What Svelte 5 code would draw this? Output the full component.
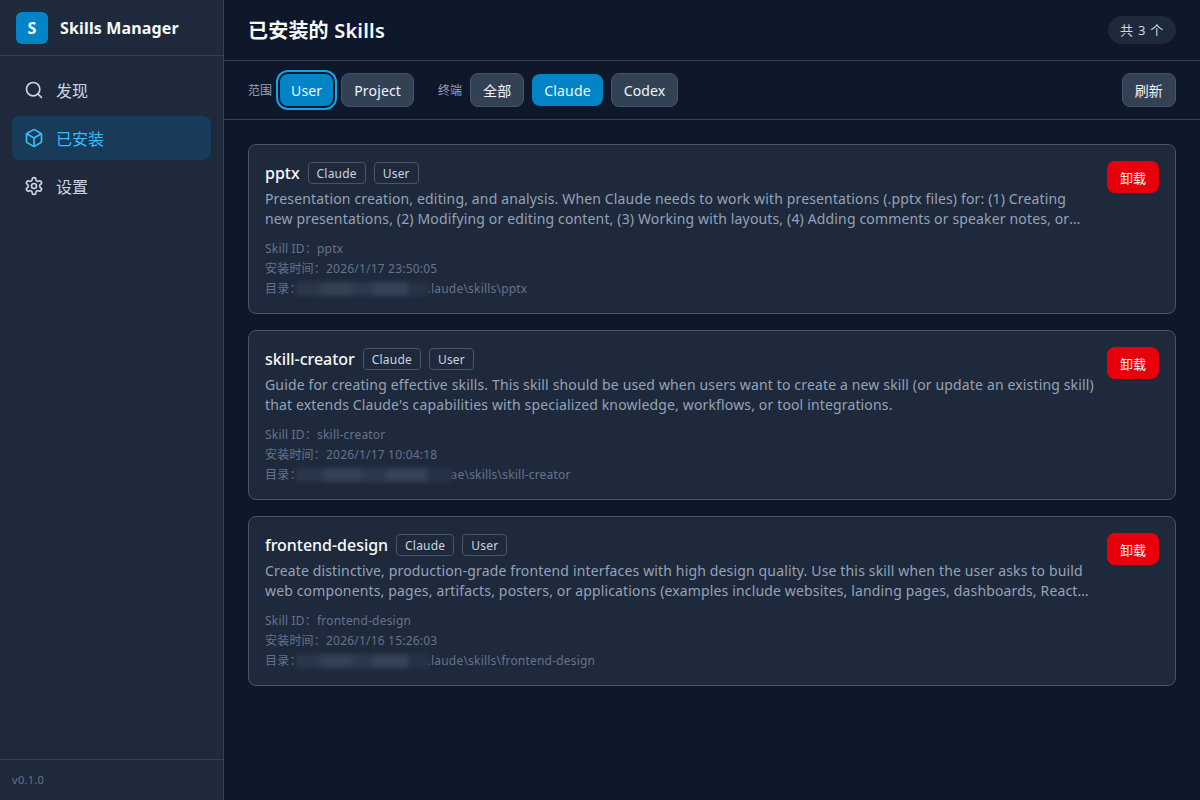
<script lang="ts">
	const scopes = [
		{ label: 'User', active: true, focus: true },
		{ label: 'Project', active: false, focus: false }
	];
	const terminals = [
		{ label: '全部', active: false },
		{ label: 'Claude', active: true },
		{ label: 'Codex', active: false }
	];
	const skills = [
		{
			name: 'pptx',
			desc: 'Presentation creation, editing, and analysis. When Claude needs to work with presentations (.pptx files) for: (1) Creating new presentations, (2) Modifying or editing content, (3) Working with layouts, (4) Adding comments or speaker notes, or any other presentation tasks',
			time: '2026/1/17 23:50:05',
			dir: '.laude\\skills\\pptx',
			blur: 133
		},
		{
			name: 'skill-creator',
			desc: "Guide for creating effective skills. This skill should be used when users want to create a new skill (or update an existing skill) that extends Claude's capabilities with specialized knowledge, workflows, or tool integrations.",
			time: '2026/1/17 10:04:18',
			dir: 'ae\\skills\\skill-creator',
			blur: 156
		},
		{
			name: 'frontend-design',
			desc: 'Create distinctive, production-grade frontend interfaces with high design quality. Use this skill when the user asks to build web components, pages, artifacts, posters, or applications (examples include websites, landing pages, dashboards, React components, HTML/CSS layouts)',
			time: '2026/1/16 15:26:03',
			dir: '.laude\\skills\\frontend-design',
			blur: 133
		}
	];
</script>

<div class="app">
	<aside class="sidebar">
		<div class="brand">
			<div class="logo">S</div>
			<span class="brand-name">Skills Manager</span>
		</div>
		<nav class="nav">
			<div class="nav-item">
				<svg viewBox="0 0 24 24" class="icon"><circle cx="11" cy="11" r="8" /><path d="m21 21-4.300-4.300" /></svg>
				<span>发现</span>
			</div>
			<div class="nav-item active">
				<svg viewBox="0 0 24 24" class="icon"><path d="M21 8a2 2 0 0 0-1-1.730l-7-4a2 2 0 0 0-2 0l-7 4A2 2 0 0 0 3 8v8a2 2 0 0 0 1 1.730l7 4a2 2 0 0 0 2 0l7-4A2 2 0 0 0 21 16Z" /><path d="m3.300 7 8.700 5 8.700-5" /><path d="M12 22V12" /></svg>
				<span>已安装</span>
			</div>
			<div class="nav-item">
				<svg viewBox="0 0 24 24" class="icon"><path d="M12.220 2h-.44a2 2 0 0 0-2 2v.18a2 2 0 0 1-1 1.730l-.43.25a2 2 0 0 1-2 0l-.15-.08a2 2 0 0 0-2.730.73l-.22.38a2 2 0 0 0 .73 2.730l.15.1a2 2 0 0 1 1 1.720v.51a2 2 0 0 1-1 1.740l-.15.09a2 2 0 0 0-.73 2.730l.22.38a2 2 0 0 0 2.730.73l.15-.08a2 2 0 0 1 2 0l.43.25a2 2 0 0 1 1 1.730V20a2 2 0 0 0 2 2h.44a2 2 0 0 0 2-2v-.18a2 2 0 0 1 1-1.730l.43-.25a2 2 0 0 1 2 0l.15.08a2 2 0 0 0 2.730-.73l.22-.39a2 2 0 0 0-.73-2.730l-.15-.08a2 2 0 0 1-1-1.740v-.5a2 2 0 0 1 1-1.740l.15-.09a2 2 0 0 0 .73-2.730l-.22-.38a2 2 0 0 0-2.730-.73l-.15.08a2 2 0 0 1-2 0l-.43-.25a2 2 0 0 1-1-1.730V4a2 2 0 0 0-2-2z" /><circle cx="12" cy="12" r="3" /></svg>
				<span>设置</span>
			</div>
		</nav>
		<div class="version">v0.1.0</div>
	</aside>

	<main class="main">
		<header class="header">
			<h1>已安装的 Skills</h1>
			<span class="count">共 3 个</span>
		</header>

		<div class="toolbar">
			<span class="label">范围</span>
			<div class="group">
				{#each scopes as s}
					<button class="btn" class:primary={s.active} class:focus={s.focus}>{s.label}</button>
				{/each}
			</div>
			<span class="label second">终端</span>
			<div class="group">
				{#each terminals as t}
					<button class="btn" class:primary={t.active}>{t.label}</button>
				{/each}
			</div>
			<button class="btn refresh">刷新</button>
		</div>

		<div class="list">
			{#each skills as skill}
				<article class="card">
					<div class="body">
						<div class="title-row">
							<h2>{skill.name}</h2>
							<span class="tag">Claude</span>
							<span class="tag">User</span>
						</div>
						<p class="desc">{skill.desc}</p>
						<div class="meta">
							<div>Skill ID：{skill.name}</div>
							<div>安装时间：{skill.time}</div>
							<div class="dir">目录：<span class="mask" style="width: {skill.blur}px"></span>{skill.dir}</div>
						</div>
					</div>
					<button class="remove">卸载</button>
				</article>
			{/each}
		</div>
	</main>
</div>

<style>
	:global(body) {
		margin: 0;
		background: #0f172a;
	}
	.app {
		display: flex;
		width: 1200px;
		height: 800px;
		overflow: hidden;
		color: #f1f5f9;
		font-family: "Noto Sans", "Noto Sans CJK SC", sans-serif;
	}
	.sidebar {
		width: 223px;
		flex: none;
		display: flex;
		flex-direction: column;
		background: #1e293b;
		border-right: 1px solid #334155;
	}
	.brand {
		display: flex;
		align-items: center;
		gap: 12px;
		height: 56px;
		padding: 0 16px;
		box-sizing: border-box;
		border-bottom: 1px solid #334155;
	}
	.logo {
		width: 32px;
		height: 32px;
		border-radius: 6px;
		background: #0284c7;
		display: flex;
		align-items: center;
		justify-content: center;
		font-size: 16px;
		font-weight: 700;
		color: #fff;
	}
	.brand-name {
		font-size: 16px;
		font-weight: 700;
		letter-spacing: 0.15px;
		color: #f8fafc;
	}
	.nav {
		flex: 1;
		display: flex;
		flex-direction: column;
		gap: 4px;
		padding: 12px;
	}
	.nav-item {
		display: flex;
		align-items: center;
		gap: 12px;
		height: 44px;
		padding: 0 12px;
		border-radius: 8px;
		font-size: 16px;
		color: #cbd5e1;
	}
	.nav-item.active {
		background: #183b59;
		color: #38bdf8;
	}
	.icon {
		width: 20px;
		height: 20px;
		flex: none;
		fill: none;
		stroke: currentColor;
		stroke-width: 2;
		stroke-linecap: round;
		stroke-linejoin: round;
	}
	.version {
		height: 41px;
		box-sizing: border-box;
		padding: 0 12px 2px;
		display: flex;
		align-items: center;
		border-top: 1px solid #334155;
		font-size: 11px;
		letter-spacing: 0.3px;
		color: #64748b;
	}
	.main {
		flex: 1;
		min-width: 0;
		display: flex;
		flex-direction: column;
		background: #0f172a;
	}
	.header {
		display: flex;
		align-items: center;
		justify-content: space-between;
		height: 61px;
		padding: 0 24px 1px;
		box-sizing: border-box;
		border-bottom: 1px solid #334155;
	}
	h1 {
		margin: 0;
		font-size: 20px;
		font-weight: 600;
		letter-spacing: 0.2px;
		color: #f8fafc;
	}
	.count {
		height: 28px;
		padding: 0 12px;
		display: flex;
		align-items: center;
		border-radius: 14px;
		background: #1e293b;
		font-size: 13px;
		letter-spacing: 0.75px;
		color: #cbd5e1;
	}
	.toolbar {
		display: flex;
		align-items: center;
		height: 59px;
		padding: 0 24px;
		box-sizing: border-box;
		border-bottom: 1px solid #334155;
	}
	.label {
		font-size: 12px;
		color: #94a3b8;
		margin-right: 8px;
	}
	.label.second {
		margin-left: 24px;
	}
	.group {
		display: flex;
		align-items: center;
		gap: 8px;
	}
	.btn {
		height: 34px;
		padding: 0 12px;
		border: 1px solid #475569;
		border-radius: 8px;
		background: #334155;
		color: #f1f5f9;
		font: inherit;
		font-size: 14px;
		letter-spacing: 0.15px;
	}
	.btn.primary {
		height: 32px;
		background: #0284c7;
		border: none;
	}
	.btn.focus {
		padding: 0 11px;
		outline: 2px solid #0ea5e9;
		outline-offset: 2px;
	}
	.refresh {
		margin-left: auto;
	}
	.list {
		display: flex;
		flex-direction: column;
		gap: 16px;
		padding: 24px;
	}
	.card {
		display: flex;
		align-items: flex-start;
		gap: 10px;
		height: 170px;
		padding: 16px;
		box-sizing: border-box;
		background: #1e293b;
		border: 1px solid #475569;
		border-radius: 8px;
	}
	.body {
		flex: 1;
		min-width: 0;
	}
	.title-row {
		display: flex;
		align-items: center;
		gap: 8px;
		height: 24px;
	}
	h2 {
		margin: 0;
		font-size: 16px;
		font-weight: 500;
		letter-spacing: -0.03px;
		color: #f8fafc;
	}
	.tag {
		height: 22px;
		box-sizing: border-box;
		padding: 0 8px;
		display: flex;
		align-items: center;
		border: 1px solid #475569;
		border-radius: 4px;
		font-size: 12px;
		letter-spacing: 0.2px;
		color: #cbd5e1;
	}
	.desc {
		margin: 4px 0 0;
		font-size: 14px;
		line-height: 20px;
		letter-spacing: 0.15px;
		color: #94a3b8;
		display: -webkit-box;
		-webkit-box-orient: vertical;
		-webkit-line-clamp: 2;
		line-clamp: 2;
		overflow: hidden;
	}
	.meta {
		margin-top: 10px;
		font-size: 12px;
		line-height: 20px;
		letter-spacing: 0.2px;
		color: #64748b;
	}
	.dir {
		display: flex;
		align-items: center;
	}
	.mask {
		height: 14px;
		margin: 0 -1px 0 -6px;
		flex: none;
		background: linear-gradient(90deg, #2a374b 0 18%, #334155 18% 42%, #2c394e 42% 58%, #354358 58% 84%, #263347 84% 100%);
		filter: blur(2.500px);
	}
	.remove {
		flex: none;
		width: 52px;
		height: 32px;
		border: none;
		border-radius: 8px;
		background: #e7000b;
		color: #fff;
		font: inherit;
		font-size: 13px;
	}
</style>
